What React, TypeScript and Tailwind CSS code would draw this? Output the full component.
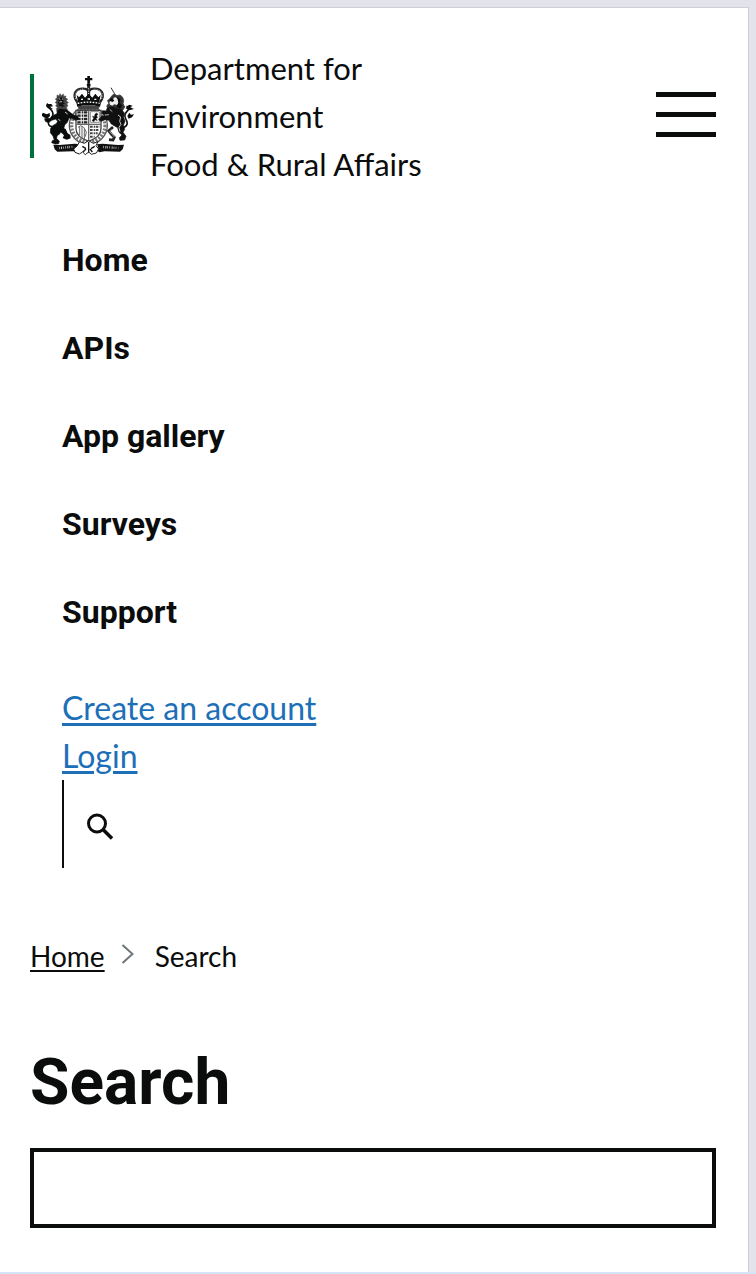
const navItems = ["Home", "APIs", "App gallery", "Surveys", "Support"];

function Lion() {
  return (
    <g>
      <path d="M108 108l6 3 3-7 4 6 6-5 1 7 7-1-2 6 7 3-4 5 6 6-5 3 4 7-5 3 3 8-5 2 1 7-7-1-5 7-6-5-8-2-3-9 3-6-5-4 4-6-5-4 4-6-4-5 5-3z" fill="#444" stroke="#555" strokeWidth="2" />
      <path d="M112 114l5 4 5-4 5 4-3 5 7 2-6 4 7 5-7 2 5 6-7 2-6-4-6 1 3-6-4-4 4-4-4-5 5-2z" fill="#111" />
      <path d="M114 119l4 3m5-3l3 2m-11 8l8-1" stroke="#ddd" strokeWidth="2.5" fill="none" />
      <path d="M116 150l22 3 18 14 14 5 3 9-10 3-10-6-9-1-5 13-8 8-3 11-8 4-4 12-8 5-1 9 8 7-2 8-10 1-11-4 2-6 6-2-4-12-8-10 1-13 6-8 11-6 4-7-6-7-12 4-10 7-9-4-2-8 10-1 6 1 11-10 10-5 1-8 4-4z" fill="#0b0c0c" stroke="#0b0c0c" strokeWidth="2" />
      <path d="M113 212l9-8 12 6 6 13 8 5 1 10-12 4-12-5 4-8-8-8-8-2z" fill="#0b0c0c" />
      <path d="M112 181l6 4m14-26l8 6" stroke="#fff" strokeWidth="2.5" fill="none" />
      <path d="M93 203c-9-1-13-8-10-16 3-7 13-11 13-21 0-8-5-14-13-20-6-4-7-9-2-12" stroke="#0b0c0c" strokeWidth="5" fill="none" />
      <path d="M80 135l11 0 5 7-9 1 9 8-13-3-7-7zM66 161l11 5 9-4 1 9-8 8-11-4-7-7z" fill="#0b0c0c" />
    </g>
  );
}

function Unicorn() {
  return (
    <g>
      <path d="M270 86l10 17 7 14" stroke="#333" strokeWidth="3" fill="none" />
      <path d="M279 105l9 5 9-2 8 7 3 10-2 9 5 10-6 10-12 3-9-5-9 3-12-5-6-8 6-9-3-9 7-4 4-8z" fill="#333" stroke="#444" strokeWidth="3" />
      <path d="M270 122l6-2 6-6 5 3 5 5 1 9-5 7-8-2-6 4-7-3-2-6z" fill="#eee" />
      <path d="M266 118l8 0 6 7-6 4-8-4zM288 113l11 8-3 11 8 8-7 9-11-4 6-14z" fill="#0b0c0c" />
      <path d="M258 148l14-5 16 7 14 2 8 10-2 13 4 12-5 12 4 12-5 9 9 12-4 11-14 1-2-8 8-8-9-8-4-14-9-5-11-7-6-10-12-2-11 5-8-5 9-10 15-3-14-5 1-9 12 1z" fill="#111" stroke="#111" strokeWidth="2" />
      <path d="M291 168l8 6-3 13 4 9-6 9 3 13" fill="none" stroke="#ccc" strokeWidth="3" />
      <path d="M276 204l-13 12 9 11 8 8-4 8-12-1" fill="none" stroke="#222" strokeWidth="8" />
      <path d="M273 211l-7 7 8 8 6 8" fill="none" stroke="#ddd" strokeWidth="2" />
      <path d="M266 151l8 7m-22 10l12-1" stroke="#fff" strokeWidth="2" />
      <path d="M305 205c9 0 16-8 13-17-3-8-9-15-6-22 3-8 9-10 11-17 1-5-2-7-7-6" stroke="#111" strokeWidth="5" fill="none" />
      <path d="M314 148l10-11 11 3-7 5 11 5-14 4zM319 171l6-10 5 6 9-1-6 9-10 4z" fill="#0b0c0c" />
    </g>
  );
}

function Crest() {
  return (
    <svg viewBox="63 45 276 252" className="h-[84px] w-[92px] shrink-0" role="img" aria-label="Royal coat of arms">
      {/* shield and garter */}
      <circle cx="202" cy="199" r="57" fill="#fff" stroke="#555" strokeWidth="4" />
      <circle cx="202" cy="199" r="50" fill="none" stroke="#777" strokeWidth="10" strokeDasharray="6 4" />
      <path d="M165 154h75v55c0 20-18 31-37 38-20-7-38-18-38-38z" fill="#fff" stroke="#444" strokeWidth="4" />
      <path d="M203 154v92M165 196h75" stroke="#666" strokeWidth="4" />
      <path d="M169 160h31M169 170h31M169 180h31M169 190h31" stroke="#222" strokeWidth="7" strokeDasharray="10 3 5 2" />
      <path d="M207 203h29M207 213h28M207 223h23M207 233h14" stroke="#444" strokeWidth="6" strokeDasharray="8 3 4 2" />
      <path d="M208 158h27v32h-27z" fill="#fff" stroke="#888" strokeWidth="3" />
      <path d="M213 185l5-7-4-7 6 2 2-8 5-3 4 4-4 4 3 6-5 1 4 8-7-3-3 6z" fill="#0b0c0c" stroke="#0b0c0c" />
      <path d="M171 205l8-5 9 5 8 14-3 14M176 202v27M183 203v34M190 210v30" stroke="#666" strokeWidth="3" fill="none" />
      {/* crown */}
      <path d="M199 51h8v6h7v7h-7v9h-8v-9h-7v-7h7z" fill="#0b0c0c" />
      <circle cx="203" cy="78" r="6" fill="#0b0c0c" />
      <path d="M169 130c-18-23-5-43 20-41 7 0 12 4 14 11 2-7 7-11 14-11 25-2 38 18 20 41" fill="#fff" stroke="#222" strokeWidth="7" />
      <path d="M164 120c-7-17 4-30 24-30M242 120c7-17-4-30-24-30" fill="none" stroke="#fff" strokeWidth="2" strokeDasharray="3 4" />
      <path d="M203 82v32" stroke="#222" strokeWidth="9" />
      <path d="M203 88v26" stroke="#fff" strokeWidth="3" strokeDasharray="3 4" />
      <path d="M167 108l7 7 9-11 9 12 11-12 11 12 9-12 9 11 7-7-4 20 5 3-3 12q-34-8-68 0l-3-12 5-3z" fill="#0b0c0c" />
      <path d="M170 133q33-7 66 0" stroke="#fff" strokeWidth="4" fill="none" strokeDasharray="5 4" />
      <path d="M180 121h6m14-1h7m13 1h6" stroke="#fff" strokeWidth="4" />
      <path d="M169 142q34-7 68 0l-6 10h-56z" fill="#444" />
      <Lion />
      <Unicorn />
      {/* motto scroll */}
      <path d="M97 257l18 1 46-4 17 2-4 10 8 7-12 7-14-3-47 1-8-7z" fill="#111" />
      <path d="M309 257l-18 1-46-4-17 2 4 10-8 7 12 7 14-3 47 1 8-7z" fill="#111" />
      <path d="M114 267l44-4" stroke="#ccc" strokeWidth="7" strokeDasharray="2 4 3 3 2 5" />
      <path d="M246 264l46 3" stroke="#ccc" strokeWidth="7" strokeDasharray="2 5 3 3 2 4" />
      <path d="M176 248l14 5 13-8 14 8 14-5-6 12 8 10-7 12-15 4-8-7-10 8-8-8-10 6-13-5-4-10 10-9z" fill="#fff" stroke="#222" strokeWidth="3" />
      <path d="M184 262l11 7m26-7l-11 7m-7-21v17m-17 14l9-9m19 9l-7-9m-4-5v16" stroke="#111" strokeWidth="4" />
    </svg>
  );
}

export default function App() {
  return (
    <div className="bg-[#e3e3ec] pt-[7px] pr-[7px] font-[Lato,sans-serif] text-[#0b0c0c]">
      <div className="border-t border-r border-[#d0d0d4] bg-white pb-11">
        <header className="pr-8 pl-[30px]">
          <div className="flex items-center justify-between pt-9">
            <a href="#" className="flex items-center">
              <span className="flex h-[84px] items-end border-l-4 border-[#00703c] pt-px pl-2">
                <Crest />
              </span>
              <span className="ml-4 text-[31px] leading-[48px]">
                Department for
                <br />
                Environment
                <br />
                Food &amp; Rural Affairs
              </span>
            </a>
            <button type="button" aria-label="Menu" className="mb-[3px] flex w-[60px] flex-col gap-[15px]">
              <span className="h-[5px] bg-[#0b0c0c]" />
              <span className="h-[5px] bg-[#0b0c0c]" />
              <span className="h-[5px] bg-[#0b0c0c]" />
            </button>
          </div>
          <nav className="pt-12 pl-8 text-[32px] leading-[48px]">
            <ul className="flex flex-col gap-10 font-[Roboto,sans-serif] font-bold">
              {navItems.map((item) => (
                <li key={item}>
                  <a href="#">{item}</a>
                </li>
              ))}
            </ul>
            <ul className="pt-12 text-[#1d70b8]">
              <li>
                <a href="#" className="underline decoration-[3px] underline-offset-[3px]">Create an account</a>
              </li>
              <li>
                <a href="#" className="underline decoration-[3px] underline-offset-[3px]">Login</a>
              </li>
            </ul>
            <button type="button" aria-label="Search" className="flex h-[88px] items-center border-l-2 border-[#0b0c0c] pl-[22px]">
              <svg viewBox="0 0 28 28" className="mt-1.5 size-7" fill="none" stroke="#0b0c0c">
                <circle cx="11" cy="10.5" r="8.5" strokeWidth="3" />
                <path d="M17 16.5l9 9" strokeWidth="3.6" />
              </svg>
            </button>
          </nav>
        </header>
        <main className="pt-[68px] pr-8 pl-[30px]">
          <nav aria-label="Breadcrumb">
            <ol className="flex items-center text-[28px] leading-10">
              <li>
                <a href="#" className="underline decoration-2 underline-offset-[3px]">Home</a>
              </li>
              <li className="flex items-center">
                <svg viewBox="0 0 14 20" className="mr-5 mb-1 ml-4 h-5 w-3.5" fill="none" stroke="#6f777b" strokeWidth="2">
                  <path d="M1.5 1l10 9-10 9" />
                </svg>
                Search
              </li>
            </ol>
          </nav>
          <h1 className="mt-[67px] font-[Roboto,sans-serif] text-[64px] leading-[80px] font-bold">
            <label htmlFor="query">Search</label>
          </h1>
          <input id="query" type="search" className="mt-[25px] block h-20 w-full appearance-none rounded-none border-4 border-[#0b0c0c] bg-white px-3 text-[32px] outline-none" />
        </main>
      </div>
      <div className="-mr-[7px] h-0.5 bg-[#d5e3f7]" />
    </div>
  );
}
